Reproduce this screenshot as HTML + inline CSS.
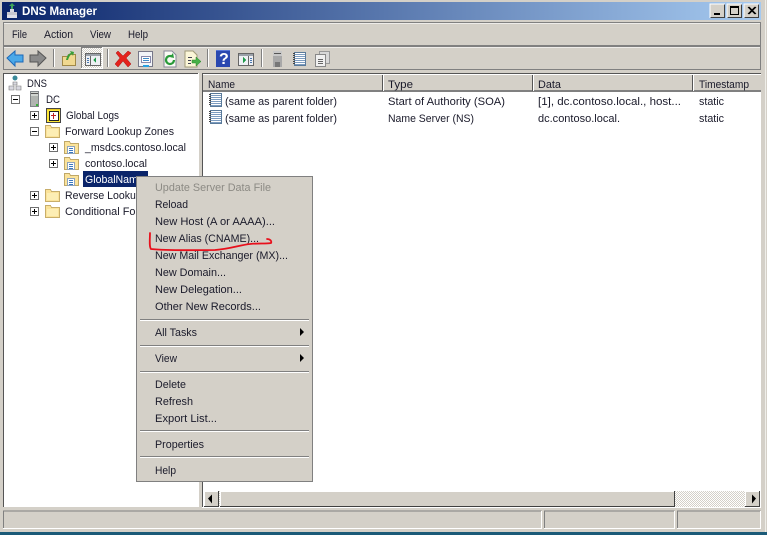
<!DOCTYPE html>
<html><head><meta charset="utf-8"><title>DNS Manager</title>
<style>
html,body{margin:0;padding:0;background:#d4d0c8;overflow:hidden}
svg{display:block}
text{font-family:"Liberation Sans",sans-serif;font-size:11px;fill:#1a1a2a}
.g{fill:#8c8a84}
</style></head><body>
<svg width="767" height="535" viewBox="0 0 767 535" xmlns="http://www.w3.org/2000/svg" shape-rendering="crispEdges">
<defs>
<linearGradient id="tb" x1="0" x2="1" y1="0" y2="0"><stop offset="0" stop-color="#0a246a"/><stop offset="1" stop-color="#a6caf0"/></linearGradient>
<pattern id="dith" width="2" height="2" patternUnits="userSpaceOnUse"><rect width="2" height="2" fill="#fff"/><rect width="1" height="1" fill="#d4d0c8"/><rect x="1" y="1" width="1" height="1" fill="#d4d0c8"/></pattern>
<symbol id="folder" width="16" height="16" viewBox="0 0 16 16"><path d="M.5 2.500h5l1 2h8v10H.5z" fill="#fbe39a" stroke="#c8ae6a"/><path d="M2 6h11v7H2z" fill="#fdeeb4"/></symbol>
<symbol id="zone" width="16" height="16" viewBox="0 0 16 16"><path d="M.5 2.500h5l1 2h8v10H.5z" fill="#fbe39a" stroke="#c0a868"/><path d="M3.500 7.500h7v7h-7z" fill="#fff" stroke="#8fa4bc"/><path d="M5 9.500h4M5 11.500h4M5 13.500h4" stroke="#3a78c0"/></symbol>
<symbol id="plus" width="9" height="9" viewBox="0 0 9 9"><rect x=".5" y=".5" width="8" height="8" fill="#fff" stroke="#707070"/><path d="M2 4.500h5M4.500 2v5" stroke="#000"/></symbol>
<symbol id="minus" width="9" height="9" viewBox="0 0 9 9"><rect x=".5" y=".5" width="8" height="8" fill="#fff" stroke="#707070"/><path d="M2 4.500h5" stroke="#000"/></symbol>
<symbol id="rec" width="16" height="16" viewBox="0 0 16 16"><rect x="2.500" y=".5" width="11" height="13" fill="#fff" stroke="#5a7a9a"/><path d="M3 2.500h10M3 4.500h10M3 6.500h10M3 8.500h10M3 10.500h10M3 12.500h10" stroke="#7c9cc0"/><path d="M1 1.500h2M1 3.500h2M1 5.500h2M1 7.500h2M1 9.500h2M1 11.500h2" stroke="#444"/></symbol>
</defs>

<rect width="767" height="535" fill="#d4d0c8"/>
<rect x="0" y="532" width="767" height="3" fill="#1b5a78"/>
<rect x="0" y="530" width="767" height="2" fill="#d4d0c8"/>
<rect x="765" y="0" width="1" height="532" fill="#efeee9"/>

<!-- title bar -->
<rect x="2" y="2" width="759" height="18" fill="url(#tb)"/>
<g shape-rendering="auto">
<path d="M12 3l3 3h-2v3h-2V6H9z" fill="#3fa45a"/>
<rect x="10" y="9" width="4" height="3" fill="#d8d8e0"/>
<rect x="7" y="12" width="10" height="3" fill="#c8c8d0"/><rect x="7" y="15" width="10" height="3" fill="#e0e0e8"/>
</g>
<text x="22" y="15" textLength="75" lengthAdjust="spacingAndGlyphs" style="font-weight:bold;font-size:12px;fill:#fff">DNS Manager</text>
<!-- window buttons -->
<g>
<rect x="710" y="4" width="15" height="14" fill="#d4d0c8"/><path d="M710 18V4h15" fill="none" stroke="#fff"/><path d="M710.500 17.500h14v-13" fill="none" stroke="#404040"/>
<rect x="714" y="13" width="6" height="2" fill="#000"/>
<rect x="727" y="4" width="15" height="14" fill="#d4d0c8"/><path d="M727 18V4h15" fill="none" stroke="#fff"/><path d="M727.500 17.500h14v-13" fill="none" stroke="#404040"/>
<rect x="730.500" y="6.500" width="8" height="8" fill="none" stroke="#000"/><rect x="730" y="6" width="9" height="2" fill="#000"/>
<rect x="744" y="4" width="15" height="14" fill="#d4d0c8"/><path d="M744 18V4h15" fill="none" stroke="#fff"/><path d="M744.500 17.500h14v-13" fill="none" stroke="#404040"/>
<path d="M748 7l7 7M749 7l7 7M755 7l-7 7M756 7l-7 7" stroke="#000" shape-rendering="auto"/>
</g>

<!-- menu panel -->
<rect x="3.500" y="22.500" width="757" height="23" fill="none" stroke="#808080"/>
<rect x="4" y="23" width="756" height="1" fill="#fff" opacity=".6"/>
<text x="12" y="38" textLength="15" lengthAdjust="spacingAndGlyphs">File</text>
<text x="44" y="38" textLength="29" lengthAdjust="spacingAndGlyphs">Action</text>
<text x="90" y="38" textLength="21" lengthAdjust="spacingAndGlyphs">View</text>
<text x="128" y="38" textLength="20" lengthAdjust="spacingAndGlyphs">Help</text>

<!-- toolbar panel -->
<rect x="3.500" y="46.500" width="757" height="23" fill="none" stroke="#808080"/>
<rect x="4" y="47" width="756" height="1" fill="#fff" opacity=".6"/>
<g shape-rendering="auto">
<path d="M7 58l8-7v4h8v7h-8v4z" fill="#4aa8e8" stroke="#1c68b8"/>
<path d="M46 58l-8-7v4h-8v7h8v4z" fill="#8a8a8a" stroke="#555"/>
<path d="M62.500 56.500h5l1-2h7v11h-13z" fill="#f0d890" stroke="#a08848"/>
<path d="M66 60c1-4 2-6 5-7l-1-2 4 1-1 4-1-2c-2 1-3 3-4 6z" fill="#38a038"/>
</g>
<rect x="81" y="47" width="22" height="22" fill="url(#dith)"/>
<path d="M81.500 68.500v-21h21" fill="none" stroke="#808080"/><path d="M102.500 47v21.500H81" fill="none" stroke="#fff"/>
<g>
<rect x="85.500" y="53.500" width="15" height="12" fill="#eef0f4" stroke="#666"/><rect x="86" y="54" width="14" height="2" fill="#9aa0a8"/><path d="M90.500 56v9" stroke="#666"/>
<path d="M87 58.500h2M87 60.500h2M87 62.500h2" stroke="#4a78b0"/><path d="M96 57v6l-3-3z" fill="#1f9a4a"/>
</g>
<g shape-rendering="auto">
<path d="M116 53l2-2 5 5 5-5 3 2-5 5 5 6-3 3-5-6-5 6-3-3 5-6z" fill="#e4221c" stroke="#a81010" stroke-width=".5"/>
<rect x="138.500" y="51.500" width="14" height="15" fill="#f2f4f8" stroke="#778"/><path d="M141.500 56.500h9v6h-9z" fill="#fff" stroke="#88a"/><path d="M143 58.500h6M143 60.500h6" stroke="#3a8ac8"/><rect x="143" y="65" width="6" height="2" fill="#28a0e0"/>
<path d="M164 51h8l4 4v12h-12z" fill="#fafaf4" stroke="#889"/><path d="M174 60a4 4 0 1 1-2-3.500" fill="none" stroke="#2a9a3a" stroke-width="2.200"/><path d="M173 53l1 5-4-1z" fill="#2a9a3a"/>
<path d="M185 51h8l4 4v12h-12z" fill="#fbf6d8" stroke="#a09a78"/><path d="M188 57.500h4M188 60.500h3M188 63.500h3" stroke="#445"/><path d="M192 60h4v-3l5 4.500-5 4.500v-3h-4z" fill="#48b048" stroke="#2a8a2a" stroke-width=".5"/>
</g>
<rect x="216" y="50" width="14" height="17" fill="#2a48b0"/><rect x="216" y="50" width="14" height="1" fill="#5a78d8"/>
<text x="219" y="64" style="font-size:16px;font-weight:bold;fill:#fff">?</text>
<g>
<rect x="238.500" y="53.500" width="15" height="12" fill="#eef0f4" stroke="#666"/><rect x="239" y="54" width="14" height="2" fill="#9aa0a8"/><path d="M248.500 56v9" stroke="#666"/>
<path d="M243 57v6l3-3z" fill="#1f9a4a"/><path d="M250 58.500h2M250 60.500h2M250 62.500h2" stroke="#4a78b0"/>
<rect x="273" y="51" width="9" height="16" fill="#a8a8a8"/><rect x="273" y="51" width="9" height="5" fill="#c8c8c8"/><rect x="274" y="53" width="7" height="1" fill="#555"/><rect x="275" y="62" width="5" height="5" fill="#777"/>
<use href="#rec" x="292" y="52"/>
<rect x="319.500" y="51.500" width="10" height="12" fill="#d8d8d8" stroke="#999"/><rect x="315.500" y="54.500" width="10" height="12" fill="#f0f0f0" stroke="#888"/><path d="M318 59.500h5M318 61.500h5M318 63.500h5" stroke="#666"/>
</g>
<rect x="53" y="49" width="1" height="18" fill="#808080"/><rect x="54" y="49" width="1" height="18" fill="#fff"/>
<rect x="107" y="49" width="1" height="18" fill="#808080"/><rect x="108" y="49" width="1" height="18" fill="#fff"/>
<rect x="207" y="49" width="1" height="18" fill="#808080"/><rect x="208" y="49" width="1" height="18" fill="#fff"/>
<rect x="261" y="49" width="1" height="18" fill="#808080"/><rect x="262" y="49" width="1" height="18" fill="#fff"/>

<!-- left pane -->
<rect x="3" y="73" width="196" height="435" fill="#fff"/>
<path d="M3.500 507V73.500H198" fill="none" stroke="#555"/>
<path d="M3 507.500h196.500V73" fill="none" stroke="#d4d0c8"/>
<g shape-rendering="auto">
<circle cx="15" cy="78" r="2.500" fill="#3a8a9a"/><path d="M13 82h4v3h-4zM9 86h5v4H9zM16 86h5v4h-5z" fill="#d8d8e0" stroke="#777" stroke-width=".6"/>
</g>
<text x="27" y="87" textLength="20" lengthAdjust="spacingAndGlyphs">DNS</text>
<use href="#minus" x="11" y="95"/>
<rect x="30" y="91" width="9" height="16" fill="#b0b4b0"/><rect x="30" y="91" width="9" height="5" fill="#d0d4d0"/><rect x="31" y="93" width="7" height="1" fill="#555"/><rect x="36" y="104" width="2" height="2" fill="#38b038"/><rect x="30.500" y="91.500" width="8" height="15" fill="none" stroke="#808488"/>
<text x="46" y="103" textLength="14" lengthAdjust="spacingAndGlyphs">DC</text>
<use href="#plus" x="30" y="111"/>
<rect x="46.500" y="108.500" width="14" height="14" fill="#ffe838" stroke="#444"/><rect x="49.500" y="111.500" width="9" height="9" fill="#fff" stroke="#222"/><path d="M53.500 113v6M51 115.500h5" stroke="#c02020"/><rect x="47" y="109" width="13" height="1" fill="#e8c820"/>
<text x="66" y="119" textLength="53" lengthAdjust="spacingAndGlyphs">Global Logs</text>
<use href="#minus" x="30" y="127"/>
<use href="#folder" x="45" y="123"/>
<text x="65" y="135" textLength="109" lengthAdjust="spacingAndGlyphs">Forward Lookup Zones</text>
<use href="#plus" x="49" y="143"/>
<use href="#zone" x="64" y="139"/>
<text x="85" y="151" textLength="101" lengthAdjust="spacingAndGlyphs">_msdcs.contoso.local</text>
<use href="#plus" x="49" y="159"/>
<use href="#zone" x="64" y="155"/>
<text x="85" y="167" textLength="62" lengthAdjust="spacingAndGlyphs">contoso.local</text>
<use href="#zone" x="64" y="171"/>
<rect x="83" y="171" width="65" height="16" fill="#0a246a"/>
<text x="85" y="183" textLength="64" lengthAdjust="spacingAndGlyphs" style="fill:#fff">GlobalNames</text>
<use href="#plus" x="30" y="191"/>
<use href="#folder" x="45" y="187"/>
<text x="65" y="199" textLength="109" lengthAdjust="spacingAndGlyphs">Reverse Lookup Zones</text>
<use href="#plus" x="30" y="207"/>
<use href="#folder" x="45" y="203"/>
<text x="65" y="215" textLength="113" lengthAdjust="spacingAndGlyphs">Conditional Forwarders</text>

<!-- right pane -->
<rect x="202" y="73" width="559" height="435" fill="#fff"/>
<path d="M202.500 507V73.500H761" fill="none" stroke="#555"/>
<rect x="203" y="74" width="558" height="17" fill="#d4d0c8"/>
<rect x="203" y="74" width="558" height="1" fill="#fff"/>
<rect x="203" y="90" width="558" height="2" fill="#808080"/>
<rect x="382" y="75" width="1" height="16" fill="#555"/><rect x="383" y="75" width="1" height="16" fill="#fff"/>
<rect x="532" y="75" width="1" height="16" fill="#555"/><rect x="533" y="75" width="1" height="16" fill="#fff"/>
<rect x="692" y="75" width="1" height="16" fill="#555"/><rect x="693" y="75" width="1" height="16" fill="#fff"/>
<text x="208" y="88" textLength="27" lengthAdjust="spacingAndGlyphs">Name</text>
<text x="388" y="88" textLength="25" lengthAdjust="spacingAndGlyphs">Type</text>
<text x="538" y="88" textLength="23" lengthAdjust="spacingAndGlyphs">Data</text>
<text x="699" y="88" textLength="50" lengthAdjust="spacingAndGlyphs">Timestamp</text>
<use href="#rec" x="208" y="93"/>
<text x="225" y="105" textLength="112" lengthAdjust="spacingAndGlyphs">(same as parent folder)</text>
<text x="388" y="105" textLength="117" lengthAdjust="spacingAndGlyphs">Start of Authority (SOA)</text>
<text x="538" y="105" textLength="143" lengthAdjust="spacingAndGlyphs">[1], dc.contoso.local., host...</text>
<text x="699" y="105" textLength="25" lengthAdjust="spacingAndGlyphs">static</text>
<use href="#rec" x="208" y="110"/>
<text x="225" y="122" textLength="112" lengthAdjust="spacingAndGlyphs">(same as parent folder)</text>
<text x="388" y="122" textLength="86" lengthAdjust="spacingAndGlyphs">Name Server (NS)</text>
<text x="538" y="122" textLength="82" lengthAdjust="spacingAndGlyphs">dc.contoso.local.</text>
<text x="699" y="122" textLength="25" lengthAdjust="spacingAndGlyphs">static</text>

<!-- scrollbar -->
<rect x="204" y="491" width="556" height="16" fill="url(#dith)"/>
<rect x="204" y="491" width="15" height="16" fill="#d4d0c8"/><path d="M204.500 506.500v-15h14" fill="none" stroke="#fff"/><path d="M218.500 491v15.500H204" fill="none" stroke="#404040"/>
<path d="M208 498.500l4-4v9z" fill="#000" shape-rendering="auto"/>
<rect x="220" y="491" width="455" height="16" fill="#d4d0c8"/><path d="M220.500 506.500v-15h454" fill="none" stroke="#fff"/><path d="M674.500 491v15.500H220" fill="none" stroke="#404040"/>
<rect x="745" y="491" width="15" height="16" fill="#d4d0c8"/><path d="M745.500 506.500v-15h14" fill="none" stroke="#fff"/><path d="M759.500 491v15.500H745" fill="none" stroke="#404040"/>
<path d="M756 498.500l-4-4v9z" fill="#000" shape-rendering="auto"/>

<!-- status bar -->
<g fill="none">
<path d="M3.500 528v-17h538" stroke="#808080"/><path d="M3 528.500h538.500V511" stroke="#fff"/>
<path d="M544.500 528v-17h130" stroke="#808080"/><path d="M544 528.500h130.500V511" stroke="#fff"/>
<path d="M677.500 528v-17h83" stroke="#808080"/><path d="M677 528.500h83.500V511" stroke="#fff"/>
</g>

<!-- context menu -->
<rect x="136.500" y="176.500" width="176" height="305" fill="#d4d0c8" stroke="#808080"/>
<text class="g" x="155" y="191" textLength="116" lengthAdjust="spacingAndGlyphs">Update Server Data File</text>
<text x="155" y="208" textLength="33" lengthAdjust="spacingAndGlyphs">Reload</text>
<text x="155" y="225" textLength="120" lengthAdjust="spacingAndGlyphs">New Host (A or AAAA)...</text>
<text x="155" y="242" textLength="104" lengthAdjust="spacingAndGlyphs">New Alias (CNAME)...</text>
<text x="155" y="259" textLength="133" lengthAdjust="spacingAndGlyphs">New Mail Exchanger (MX)...</text>
<text x="155" y="276" textLength="71" lengthAdjust="spacingAndGlyphs">New Domain...</text>
<text x="155" y="293" textLength="87" lengthAdjust="spacingAndGlyphs">New Delegation...</text>
<text x="155" y="310" textLength="106" lengthAdjust="spacingAndGlyphs">Other New Records...</text>
<rect x="140" y="319" width="169" height="1" fill="#808080"/><rect x="140" y="320" width="169" height="1" fill="#fff"/>
<text x="155" y="336" textLength="42" lengthAdjust="spacingAndGlyphs">All Tasks</text>
<path d="M300 328l4 4-4 4z" fill="#000" shape-rendering="auto"/>
<rect x="140" y="345" width="169" height="1" fill="#808080"/><rect x="140" y="346" width="169" height="1" fill="#fff"/>
<text x="155" y="362" textLength="22" lengthAdjust="spacingAndGlyphs">View</text>
<path d="M300 354l4 4-4 4z" fill="#000" shape-rendering="auto"/>
<rect x="140" y="371" width="169" height="1" fill="#808080"/><rect x="140" y="372" width="169" height="1" fill="#fff"/>
<text x="155" y="388" textLength="31" lengthAdjust="spacingAndGlyphs">Delete</text>
<text x="155" y="405" textLength="38" lengthAdjust="spacingAndGlyphs">Refresh</text>
<text x="155" y="422" textLength="62" lengthAdjust="spacingAndGlyphs">Export List...</text>
<rect x="140" y="430" width="169" height="1" fill="#808080"/><rect x="140" y="431" width="169" height="1" fill="#fff"/>
<text x="155" y="448" textLength="49" lengthAdjust="spacingAndGlyphs">Properties</text>
<rect x="140" y="456" width="169" height="1" fill="#808080"/><rect x="140" y="457" width="169" height="1" fill="#fff"/>
<text x="155" y="474" textLength="21" lengthAdjust="spacingAndGlyphs">Help</text>

<!-- red annotation -->
<path d="M150 233C150 238 149 247 151 249C170 251 195 250 215 250C230 249 240 245 250 244C258 243 266 244 271 243C272 241 270 239 267 239" fill="none" stroke="#e8101c" stroke-width="1.800" stroke-linecap="round" shape-rendering="auto"/>
</svg>
</body></html>
